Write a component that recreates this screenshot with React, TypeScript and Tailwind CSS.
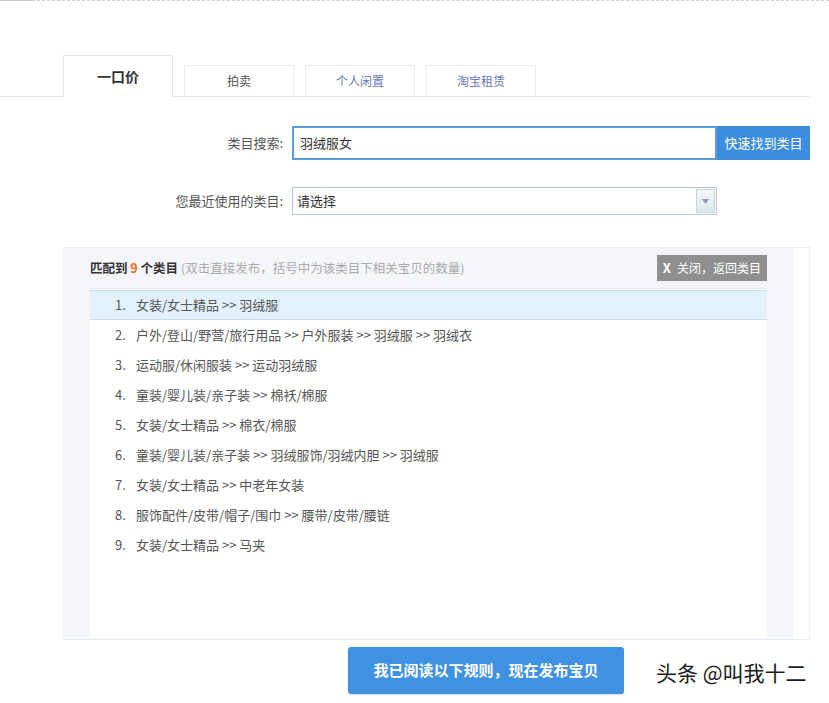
const FONT = { fontFamily: '"Noto Sans CJK SC", "Noto Sans", sans-serif' }

const tabs = ['拍卖', '个人闲置', '淘宝租赁']

const results = [
  '女装/女士精品 >> 羽绒服',
  '户外/登山/野营/旅行用品 >> 户外服装 >> 羽绒服 >> 羽绒衣',
  '运动服/休闲服装 >> 运动羽绒服',
  '童装/婴儿装/亲子装 >> 棉袄/棉服',
  '女装/女士精品 >> 棉衣/棉服',
  '童装/婴儿装/亲子装 >> 羽绒服饰/羽绒内胆 >> 羽绒服',
  '女装/女士精品 >> 中老年女装',
  '服饰配件/皮带/帽子/围巾 >> 腰带/皮带/腰链',
  '女装/女士精品 >> 马夹',
]

export default function App() {
  return (
    <div className="relative w-[829px] h-[703px] bg-white overflow-hidden text-[#555]" style={FONT}>
      {/* dotted rule at the very top */}
      <div className="flex h-[2px]">
        <div className="w-[32px] border-t border-[#c8c8c8]" />
        <div className="flex-1 border-t border-dashed border-[#cfcfcf]" />
      </div>

      {/* tabs */}
      <div className="mt-[53px] mr-[19px] flex items-end pl-[63px] border-b border-[#e4e8ef] h-[42px]">
        <div className="w-[110px] h-[42px] -mb-px border border-[#e6e6e6] border-b-white bg-white flex items-center justify-center text-[14px] font-bold text-[#333]">
          一口价
        </div>
        {tabs.map((t, i) => (
          <div
            key={t}
            className={
              'ml-[11px] w-[110px] h-[31px] border border-b-0 border-[#e8ebf2] flex items-center justify-center text-[12px] ' +
              (i === 0 ? 'text-[#555]' : 'text-[#6a78b8]')
            }
          >
            {t}
          </div>
        ))}
      </div>

      {/* search row */}
      <div className="mt-[29px] flex items-center h-[34px]">
        <div className="w-[283px] text-right text-[13px] text-[#555]">类目搜索:</div>
        <div className="ml-[9px] w-[425px] h-[34px] border-2 border-[#5b9be0] flex items-center px-[6px] text-[13px] text-[#333]">
          羽绒服女
        </div>
        <div className="w-[93px] h-[34px] bg-[#3b8de0] text-white text-[13px] flex items-center justify-center">
          快速找到类目
        </div>
      </div>

      {/* recent select row */}
      <div className="mt-[27px] flex items-center h-[28px]">
        <div className="w-[283px] text-right text-[13px] text-[#555]">您最近使用的类目:</div>
        <div className="ml-[9px] w-[425px] h-[28px] border border-[#b9c8d8] flex items-center text-[13px] text-[#333]">
          <span className="flex-1 pl-[4px]">请选择</span>
          <span className="w-[19px] h-[24px] mr-[1px] border border-[#c6d2de] bg-gradient-to-b from-[#f4f7fa] to-[#dfe6ee] flex items-center justify-center">
            <svg width="7" height="5" viewBox="0 0 7 5">
              <path d="M0 0h7L3.5 5z" fill="#8a9bb0" />
            </svg>
          </span>
        </div>
      </div>

      {/* match panel */}
      <div className="mt-[32px] ml-[63px] w-[747px] flex border-t border-b border-[#e7eaf3]">
        <div className="w-[730px] bg-[#f5f6fb] pl-[27px] pr-[26px] pb-px">
          <div className="h-[40px] flex items-center justify-between">
            <div className="text-[12.5px]">
              <span className="font-bold text-[#333]">匹配到 </span>
              <span className="font-bold text-[#f26a1b]">9</span>
              <span className="font-bold text-[#333]"> 个类目 </span>
              <span className="text-[#aaa]">(双击直接发布，括号中为该类目下相关宝贝的数量)</span>
            </div>
            <div className="h-[26px] px-[6px] bg-[#8f8f8f] text-white text-[12px] flex items-center gap-[6px]">
              <span className="font-bold text-[13px]">X</span>
              <span>关闭，返回类目</span>
            </div>
          </div>
          <div className="h-[350px] bg-white border-t border-[#e3e9f2] pt-px">
            {results.map((r, i) => (
              <div
                key={i}
                className={
                  'h-[30px] flex items-center pl-[25px] text-[13px] text-[#555] ' +
                  (i === 0 ? 'bg-[#e2f1fb] border-t border-b border-[#c4ddef]' : '')
                }
              >
                <span className="w-[21px]">{i + 1}.</span>
                <span>{r}</span>
              </div>
            ))}
          </div>
        </div>
        <div className="flex-1 bg-white border-r border-[#eef0f6]" />
      </div>

      {/* publish button */}
      <div className="mt-[7px] ml-[348px] w-[276px] h-[47px] rounded-[3px] bg-[#3f91e2] text-white text-[15px] font-bold flex items-center justify-center shadow-[0_1px_2px_rgba(0,0,0,0.15)]">
        我已阅读以下规则，现在发布宝贝
      </div>

      {/* watermark */}
      <div
        className="absolute left-[656px] top-[662px] text-[21px] text-[#1a1a1a] leading-none"
        style={{ textShadow: '0 0 2px #fff, 0 0 2px #fff, 1px 1px 0 #fff' }}
      >
        头条 @叫我十二
      </div>
    </div>
  )
}
